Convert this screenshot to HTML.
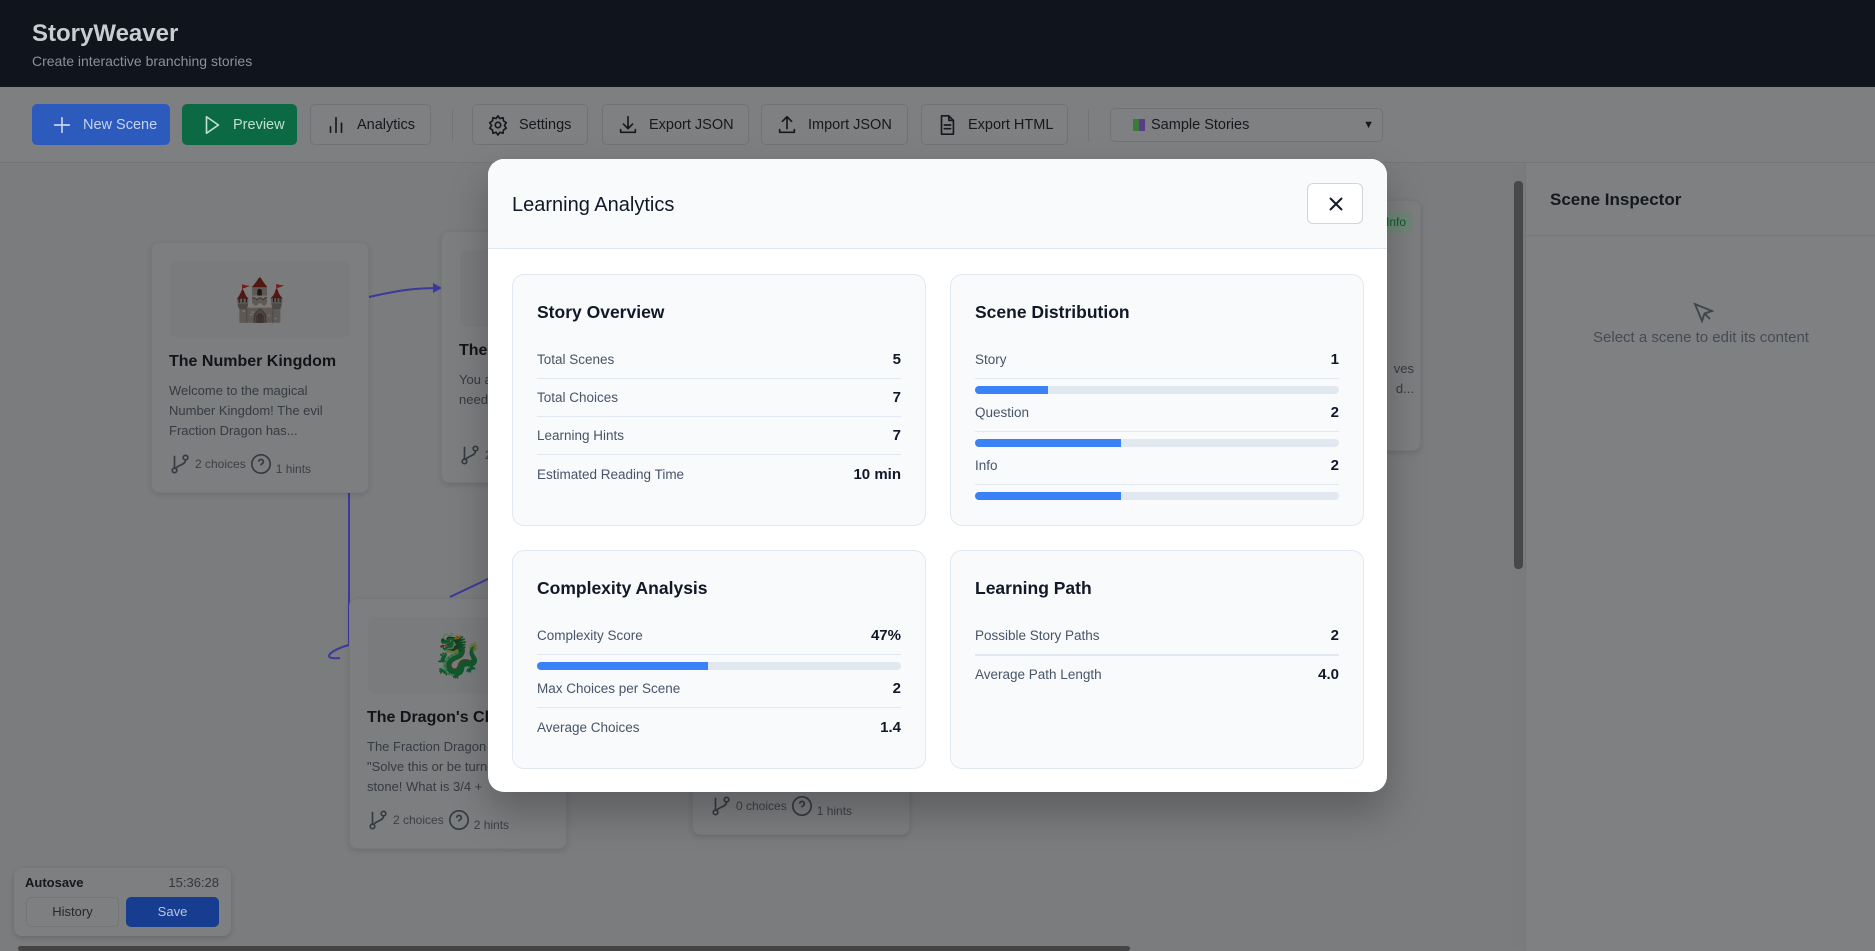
<!DOCTYPE html>
<html><head><meta charset="utf-8"><style>
*{box-sizing:border-box;margin:0;padding:0}
body{width:1875px;height:951px;overflow:hidden;background:#7b7c7e;font-family:"Liberation Sans",Arial,sans-serif;position:relative}
.hdr{position:absolute;left:0;top:0;width:1875px;height:87px;background:#10141d}
.hdr h1{position:absolute;left:32px;top:20px;font-size:24px;font-weight:700;color:#c9ccd1}
.hdr p{position:absolute;left:32px;top:53px;font-size:14px;color:#8b9099}
.tb{position:absolute;left:0;top:87px;width:1875px;height:76px;background:#7e7f80;border-bottom:1px solid #737579}
.btn{position:absolute;top:17px;height:41px;border:1px solid #6f7378;border-radius:5px;background:#7f8081;color:#15181d;font-size:14.5px;display:flex;align-items:center;padding-left:14px;gap:10px}
.btn svg{width:22px;height:22px;fill:none;stroke:currentColor;stroke-width:1.8;stroke-linecap:round;stroke-linejoin:round}
.div{position:absolute;top:22px;width:1px;height:32px;background:#717377}
.node{position:absolute;background:#7d7e80;border:1px solid #76787c;border-radius:8px;box-shadow:0 2px 6px rgba(0,0,0,.12)}
.node .img{position:absolute;left:18px;top:18px;right:18px;height:77px;background:#7a7b7d;border-radius:8px;text-align:center;font-size:42px;line-height:77px}
.node .img span{filter:brightness(.55) saturate(.8)}
.node h3{position:absolute;left:17px;top:110px;font-size:16px;font-weight:600;color:#121418;white-space:nowrap}
.node .t{position:absolute;left:17px;top:138px;font-size:13px;line-height:20px;color:#363a41;width:184px}
.node .f{position:absolute;left:17px;bottom:16px;font-size:12px;color:#3b3f46;display:flex;align-items:center;gap:4px;white-space:nowrap}
.node .f svg{width:22px;height:22px;fill:none;stroke:#363a42;stroke-width:1.8}
.modal{position:absolute;left:488px;top:159px;width:899px;height:633px;background:#fff;border-radius:16px;overflow:hidden;box-shadow:0 20px 40px rgba(0,0,0,.25)}
.mh{height:90px;background:#f8fafc;border-bottom:1px solid #e2e8f0;position:relative}
.mh h2{position:absolute;left:24px;top:35px;font-size:20px;font-weight:500;color:#111827}
.close{position:absolute;left:819px;top:24px;width:56px;height:41px;border:1px solid #d1d5db;border-radius:6px;background:#fff}
.card{position:absolute;background:#f8fafc;border:1px solid #e2e8f0;border-radius:12px;width:414px;padding:0 24px}
.card h4{font-size:17.5px;font-weight:600;color:#111827;margin-top:27px;margin-bottom:18px}
.row{display:flex;justify-content:space-between;align-items:center;height:38px;border-bottom:1px solid #e2e8f0;font-size:13.5px;color:#475569}
.row:last-child{border-bottom:none}
.row b{font-size:15px;color:#111827;font-weight:600}
.bar{height:8px;background:#e2e8f0;border-radius:4px;margin:7px 0 0;overflow:hidden}
.bar i{display:block;height:100%;background:#3b82f6}
</style></head><body>
<div class="hdr"><h1>StoryWeaver</h1><p>Create interactive branching stories</p></div>
<div class="tb">
 <div class="btn" style="left:32px;width:138px;background:#2c5bbd;border-color:#2c5bbd;color:#c8d3ea;padding-left:18px"><svg viewBox="0 0 24 24"><path d="M12 4v16M4 12h16"/></svg>New Scene</div>
 <div class="btn" style="left:182px;width:115px;background:#0b6a43;border-color:#0b6a43;color:#c0e0cf;padding-left:18px"><svg viewBox="0 0 24 24"><path d="M6 3l13 9-13 9z"/></svg>Preview</div>
 <div class="btn" style="left:310px;width:121px"><svg viewBox="0 0 24 24"><path d="M6 20v-6M12 20V4M18 20v-10"/></svg>Analytics</div>
 <div class="div" style="left:452px"></div>
 <div class="btn" style="left:472px;width:116px"><svg viewBox="0 0 24 24"><circle cx="12" cy="12" r="3"/><path d="M12 2l2 3 3.5-1 .5 3.5 3 2-2 3 2 3-3 2-.5 3.5-3.5-1-2 3-2-3-3.5 1-.5-3.5-3-2 2-3-2-3 3-2 .5-3.5 3.5 1z"/></svg>Settings</div>
 <div class="btn" style="left:602px;width:147px"><svg viewBox="0 0 24 24"><path d="M12 3v13M7 11l5 5 5-5M4 17v3h16v-3"/></svg>Export JSON</div>
 <div class="btn" style="left:761px;width:147px"><svg viewBox="0 0 24 24"><path d="M12 16V3M7 8l5-5 5 5M4 17v3h16v-3"/></svg>Import JSON</div>
 <div class="btn" style="left:921px;width:147px"><svg viewBox="0 0 24 24"><path d="M6 2h8l5 5v15H6z M14 2v5h5M9 12h7M9 16h7"/></svg>Export HTML</div>
 <div class="div" style="left:1088px"></div>
 <div class="btn" style="left:1110px;width:273px;top:21px;height:34px;padding-left:22px;gap:6px;font-size:14.5px"><span style="display:inline-block;width:12px;height:12px;background:linear-gradient(90deg,#3a7a3a 50%,#5a3a8a 50%)"></span>Sample Stories<span style="position:absolute;right:8px;font-size:11px">&#9660;</span></div>
</div>
<svg style="position:absolute;left:0;top:0" width="1875" height="951"><g fill="none" stroke="#3b3a9a" stroke-width="2">
<path d="M369 297 C400 290,415 288,440 288"/><path d="M349 493 L349 645 C330 650,320 660,340 658"/><path d="M450 597 L490 578"/></g>
<path d="M433 283 L442 288 L433 293z" fill="#3b3a9a"/></svg>
<div class="node" style="left:151px;top:242px;width:218px;height:251px"><div class="img"><span>🏰</span></div><h3>The Number Kingdom</h3><div class="t">Welcome to the magical Number Kingdom! The evil Fraction Dragon has...</div><div class="f"><svg viewBox="0 0 24 24"><circle cx="6" cy="19" r="2.5"/><circle cx="18" cy="5" r="2.5"/><path d="M6 3v13.5M18 7.5c0 6-9 5-11 10"/></svg>2 choices <svg viewBox="0 0 24 24"><circle cx="12" cy="12" r="10"/><path d="M9.5 9.5a2.5 2.5 0 1 1 3.5 2.3c-.7.3-1 .8-1 1.7M12 17h.01"/></svg><span style="margin-top:10px">1 hints</span></div></div>
<div class="node" style="left:441px;top:231px;width:218px;height:252px"><div class="img"></div><h3>The Division Forest</h3><div class="t">You are in a forest where trees need dividing...</div><div class="f"><svg viewBox="0 0 24 24"><circle cx="6" cy="19" r="2.5"/><circle cx="18" cy="5" r="2.5"/><path d="M6 3v13.5M18 7.5c0 6-9 5-11 10"/></svg>2 choices</div></div>
<div class="node" style="left:349px;top:598px;width:218px;height:251px"><div class="img"><span>🐉</span></div><h3>The Dragon's Challenge</h3><div class="t">The Fraction Dragon roars: "Solve this or be turned to stone! What is 3/4 +</div><div class="f"><svg viewBox="0 0 24 24"><circle cx="6" cy="19" r="2.5"/><circle cx="18" cy="5" r="2.5"/><path d="M6 3v13.5M18 7.5c0 6-9 5-11 10"/></svg>2 choices <svg viewBox="0 0 24 24"><circle cx="12" cy="12" r="10"/><path d="M9.5 9.5a2.5 2.5 0 1 1 3.5 2.3c-.7.3-1 .8-1 1.7M12 17h.01"/></svg><span style="margin-top:10px">2 hints</span></div></div>
<div class="node" style="left:692px;top:584px;width:218px;height:251px"><div class="f"><svg viewBox="0 0 24 24"><circle cx="6" cy="19" r="2.5"/><circle cx="18" cy="5" r="2.5"/><path d="M6 3v13.5M18 7.5c0 6-9 5-11 10"/></svg>0 choices <svg viewBox="0 0 24 24"><circle cx="12" cy="12" r="10"/><path d="M9.5 9.5a2.5 2.5 0 1 1 3.5 2.3c-.7.3-1 .8-1 1.7M12 17h.01"/></svg><span style="margin-top:10px">1 hints</span></div></div>
<div class="node" style="left:1203px;top:200px;width:218px;height:251px"><span style="position:absolute;right:8px;top:10px;background:#6f8577;color:#0d5a2c;font-size:12px;padding:4px 6px;border-radius:4px">Info</span><div class="t" style="top:158px;left:120px;width:90px;text-align:right">ves<br>d...</div></div>
<div style="position:absolute;left:1513px;top:167px;width:12px;height:780px;background:#7a7b7d"></div>
<div style="position:absolute;left:1514px;top:181px;width:9px;height:388px;background:#484848;border-radius:4px"></div>
<div style="position:absolute;left:1525px;top:163px;width:350px;height:788px;background:#7f8081;border-left:1px solid #75777a">
 <div style="height:73px;border-bottom:1px solid #75777a;padding:27px 24px;font-size:17px;font-weight:600;color:#15181d">Scene Inspector</div>
 <svg style="position:absolute;left:165px;top:137px" width="24" height="24" viewBox="0 0 24 24" fill="none" stroke="#3f444b" stroke-width="1.8"><path d="M4 4l7 17 2.5-7.5L21 11z M13.5 13.5L19 19"/></svg>
 <div style="position:absolute;left:0;width:350px;top:166px;text-align:center;font-size:15px;color:#454b54">Select a scene to edit its content</div>
</div>
<div style="position:absolute;left:18px;top:946px;width:1112px;height:5px;background:#444;border-radius:3px"></div>
<div style="position:absolute;left:14px;top:868px;width:217px;height:68px;background:#7e7f80;border-radius:8px;box-shadow:0 2px 6px rgba(0,0,0,.15)">
 <div style="position:absolute;left:11px;top:7px;font-size:13px;font-weight:700;color:#15181d">Autosave</div>
 <div style="position:absolute;right:12px;top:7px;font-size:13px;color:#33373d">15:36:28</div>
 <div style="position:absolute;left:12px;top:29px;width:93px;height:30px;border:1px solid #74767a;border-radius:5px;text-align:center;line-height:28px;font-size:13px;color:#25282d">History</div>
 <div style="position:absolute;left:112px;top:29px;width:93px;height:30px;background:#163d90;border-radius:5px;text-align:center;line-height:30px;font-size:13px;color:#b9c6e2">Save</div>
</div>
<div class="modal">
 <div class="mh"><h2>Learning Analytics</h2><div class="close"><svg width="56" height="41" viewBox="0 0 56 41" fill="none" stroke="#111827" stroke-width="2"><path d="M22 14l12 12M34 14L22 26"/></svg></div></div>
 <div class="card" style="left:24px;top:115px;height:252px"><h4>Story Overview</h4>
  <div class="row"><span>Total Scenes</span><b>5</b></div>
  <div class="row"><span>Total Choices</span><b>7</b></div>
  <div class="row"><span>Learning Hints</span><b>7</b></div>
  <div class="row"><span>Estimated Reading Time</span><b>10 min</b></div></div>
 <div class="card" style="left:462px;top:115px;height:252px"><h4>Scene Distribution</h4>
  <div class="row" style="border-bottom:1px solid #e2e8f0"><span>Story</span><b>1</b></div><div class="bar"><i style="width:20%"></i></div>
  <div class="row" style="border-bottom:1px solid #e2e8f0"><span>Question</span><b>2</b></div><div class="bar"><i style="width:40%"></i></div>
  <div class="row" style="border-bottom:1px solid #e2e8f0"><span>Info</span><b>2</b></div><div class="bar"><i style="width:40%"></i></div></div>
 <div class="card" style="left:24px;top:391px;height:219px"><h4>Complexity Analysis</h4>
  <div class="row" style="border-bottom:1px solid #e2e8f0"><span>Complexity Score</span><b>47%</b></div><div class="bar"><i style="width:47%"></i></div>
  <div class="row" style="border-bottom:1px solid #e2e8f0"><span>Max Choices per Scene</span><b>2</b></div>
  <div class="row"><span>Average Choices</span><b>1.4</b></div></div>
 <div class="card" style="left:462px;top:391px;height:219px"><h4>Learning Path</h4>
  <div class="row"><span>Possible Story Paths</span><b>2</b></div>
  <div class="row" style="border-top:1px solid #e2e8f0;border-bottom:none"><span>Average Path Length</span><b>4.0</b></div></div>
</div>
</body></html>
